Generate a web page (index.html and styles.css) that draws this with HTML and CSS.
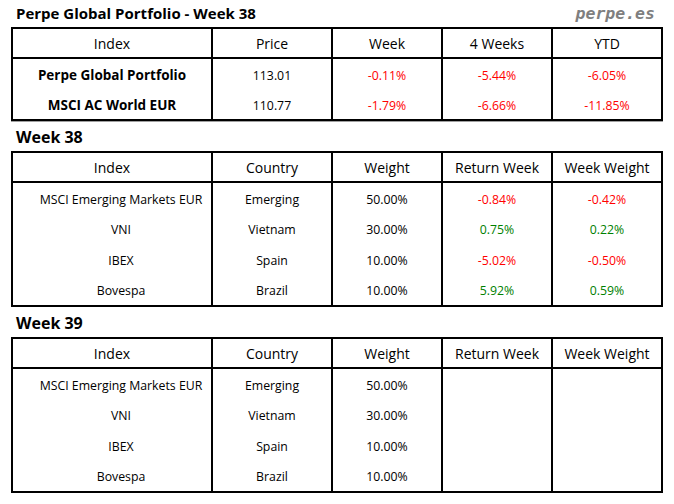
FILE: index.html
```html
<!DOCTYPE html>
<html lang="en">
<head>
<meta charset="utf-8">
<title>Perpe Global Portfolio - Week 38</title>
<link rel="stylesheet" href="styles.css">
</head>
<body>
<main class="page">
  <header class="top">
    <h1 class="title">Perpe Global Portfolio - Week 38</h1>
    <span class="brand">perpe.es</span>
  </header>

  <section class="tbl tbl-summary">
    <div class="th">Index</div>
    <div class="th">Price</div>
    <div class="th">Week</div>
    <div class="th">4 Weeks</div>
    <div class="th">YTD</div>

    <div class="td strong">Perpe Global Portfolio</div>
    <div class="td">113.01</div>
    <div class="td neg">-0.11%</div>
    <div class="td neg">-5.44%</div>
    <div class="td neg">-6.05%</div>

    <div class="td strong">MSCI AC World EUR</div>
    <div class="td">110.77</div>
    <div class="td neg">-1.79%</div>
    <div class="td neg">-6.66%</div>
    <div class="td neg">-11.85%</div>
  </section>

  <h2 class="section-title">Week 38</h2>
  <section class="tbl">
    <div class="th">Index</div>
    <div class="th">Country</div>
    <div class="th">Weight</div>
    <div class="th">Return Week</div>
    <div class="th">Week Weight</div>

    <div class="td idx">MSCI Emerging Markets EUR</div>
    <div class="td">Emerging</div>
    <div class="td">50.00%</div>
    <div class="td neg">-0.84%</div>
    <div class="td neg">-0.42%</div>

    <div class="td idx">VNI</div>
    <div class="td">Vietnam</div>
    <div class="td">30.00%</div>
    <div class="td pos">0.75%</div>
    <div class="td pos">0.22%</div>

    <div class="td idx">IBEX</div>
    <div class="td">Spain</div>
    <div class="td">10.00%</div>
    <div class="td neg">-5.02%</div>
    <div class="td neg">-0.50%</div>

    <div class="td idx">Bovespa</div>
    <div class="td">Brazil</div>
    <div class="td">10.00%</div>
    <div class="td pos">5.92%</div>
    <div class="td pos">0.59%</div>
  </section>

  <h2 class="section-title">Week 39</h2>
  <section class="tbl">
    <div class="th">Index</div>
    <div class="th">Country</div>
    <div class="th">Weight</div>
    <div class="th">Return Week</div>
    <div class="th">Week Weight</div>

    <div class="td idx">MSCI Emerging Markets EUR</div>
    <div class="td">Emerging</div>
    <div class="td">50.00%</div>
    <div class="td"></div>
    <div class="td"></div>

    <div class="td idx">VNI</div>
    <div class="td">Vietnam</div>
    <div class="td">30.00%</div>
    <div class="td"></div>
    <div class="td"></div>

    <div class="td idx">IBEX</div>
    <div class="td">Spain</div>
    <div class="td">10.00%</div>
    <div class="td"></div>
    <div class="td"></div>

    <div class="td idx">Bovespa</div>
    <div class="td">Brazil</div>
    <div class="td">10.00%</div>
    <div class="td"></div>
    <div class="td"></div>
  </section>
</main>
</body>
</html>
```

FILE: styles.css
```css
html, body {
  margin: 0;
  padding: 0;
  background: #ffffff;
}

body {
  font-family: "Open Sans", "Liberation Sans", sans-serif;
  color: #000000;
}

.page {
  width: 652px;
  padding-left: 11px;
}

.top {
  height: 27px;
  display: flex;
  justify-content: space-between;
  align-items: baseline;
  padding: 0 8px 0 5px;
  line-height: 27px;
}

.title {
  margin: 0;
  font-size: 15px;
  font-weight: 700;
}

.brand {
  font-family: "DejaVu Sans Mono", "Liberation Mono", monospace;
  font-size: 16.5px;
  font-weight: 700;
  font-style: italic;
  color: #7f7f7f;
}

.section-title {
  margin: 0;
  height: 30px;
  padding: 1px 0 0 5px;
  box-sizing: border-box;
  line-height: 30px;
  font-size: 16px;
  font-weight: 700;
}

.tbl {
  display: grid;
  grid-template-columns: 200px 120px 110px 110px 110px;
  width: 652px;
  box-sizing: border-box;
  border: 2px solid #000000;
  border-right: none;
}

.tbl-summary {
  box-shadow: 0 1px 0 #a0a0a0;
}

.th,
.td {
  box-sizing: border-box;
  border-right: 2px solid #000000;
  display: flex;
  align-items: center;
  justify-content: center;
  white-space: nowrap;
}

.th {
  height: 30px;
  border-bottom: 2px solid #000000;
  font-size: 14px;
}

.td {
  height: 30.5px;
  padding-top: 2px;
  font-size: 12.3px;
}

.tbl-summary .td {
  height: 30px;
}

.strong {
  font-weight: 700;
  font-size: 13.5px;
}

.idx {
  padding-left: 18px;
}

.neg {
  color: #ff0000;
}

.pos {
  color: #008000;
}
```
